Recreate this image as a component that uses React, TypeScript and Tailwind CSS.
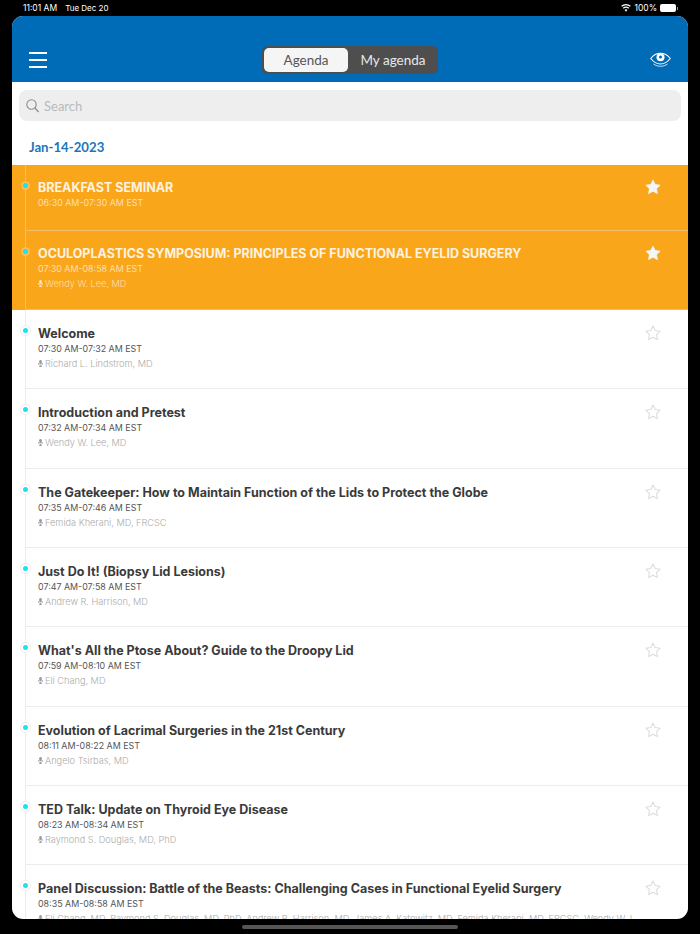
import React from "react";

const rows = [
  { t: "Welcome", h: "07:30 AM-07:32 AM EST", s: "Richard L. Lindstrom, MD" },
  { t: "Introduction and Pretest", h: "07:32 AM-07:34 AM EST", s: "Wendy W. Lee, MD" },
  { t: "The Gatekeeper: How to Maintain Function of the Lids to Protect the Globe", h: "07:35 AM-07:46 AM EST", s: "Femida Kherani, MD, FRCSC" },
  { t: "Just Do It! (Biopsy Lid Lesions)", h: "07:47 AM-07:58 AM EST", s: "Andrew R. Harrison, MD" },
  { t: "What's All the Ptose About? Guide to the Droopy Lid", h: "07:59 AM-08:10 AM EST", s: "Eli Chang, MD" },
  { t: "Evolution of Lacrimal Surgeries in the 21st Century", h: "08:11 AM-08:22 AM EST", s: "Angelo Tsirbas, MD" },
  { t: "TED Talk: Update on Thyroid Eye Disease", h: "08:23 AM-08:34 AM EST", s: "Raymond S. Douglas, MD, PhD" },
  { t: "Panel Discussion: Battle of the Beasts: Challenging Cases in Functional Eyelid Surgery", h: "08:35 AM-08:58 AM EST", s: "Eli Chang, MD, Raymond S. Douglas, MD, PhD, Andrew R. Harrison, MD, James A. Katowitz, MD, Femida Kherani, MD, FRCSC, Wendy W. L" },
];

const STAR = "M12 2.6l2.9 6.1 6.6.9-4.8 4.6 1.2 6.6L12 17.6l-5.9 3.2 1.2-6.6L2.5 9.6l6.6-.9z";

function Star({ filled }: { filled: boolean }) {
  return (
    <svg width="18" height="18" viewBox="0 0 24 24" fill={filled ? "#f0f7fd" : "none"} stroke={filled ? "#f0f7fd" : "#dcdcdc"} strokeWidth={filled ? 1 : 1.4} strokeLinejoin="round">
      <path d={STAR} />
    </svg>
  );
}

function Mic({ color }: { color: string }) {
  return (
    <svg width="5" height="7" viewBox="0 0 10 14" fill={color} className="shrink-0">
      <rect x="2.5" y="0" width="5" height="8.5" rx="2.5" />
      <path d="M0 6h1.2c0 2.4 1.6 3.8 3.8 3.8S8.800 8.400 8.800 6H10c0 3-1.700 4.700-4.200 5v1.600H8V14H2v-1.400h2.200V11C1.700 10.700 0 9 0 6z" />
    </svg>
  );
}

function Row({ t, h, s, orange, cls }: { t: string; h: string; s?: string; orange?: boolean; cls: string }) {
  return (
    <div className={`relative ${cls} pl-[13px] overflow-hidden`}>
      <div className={`h-full border-l border-b pl-[12px] ${orange ? "border-[#f2bd69]" : "border-[#ececec]"}`}>
        <div className="flex justify-between h-full">
          <div className={`min-w-0 ${orange ? "pt-[15px]" : "pt-[16px]"}`}>
            <div className={`text-[12.500px] leading-[16px] font-bold whitespace-nowrap ${orange ? "text-[#fdf3e0]" : "text-[#3a3a3a]"}`}>{t}</div>
            <div className={`mt-[1px] text-[8.900px] leading-[12px] whitespace-nowrap ${orange ? "text-[#fcdfae]" : "text-[#555555]"}`}>{h}</div>
            {s && (
              <div className={`mt-[1px] flex items-center gap-[2px] text-[9.200px] font-light leading-[15px] whitespace-nowrap ${orange ? "text-[#fcdfae]" : "text-[#ababab]"}`}>
                <Mic color={orange ? "#fcebd0" : "#9a9a9a"} />
                {s}
              </div>
            )}
          </div>
          <div className={`shrink-0 w-[70px] flex justify-center items-start ${orange ? "pt-[13px]" : "pt-[14px]"}`}>
            <Star filled={!!orange} />
          </div>
        </div>
      </div>
      <div className={`absolute left-[8.500px] top-[16px] w-[9px] h-[9px] rounded-full border-[2px] bg-[#19e3ee] ${orange ? "border-[#fbbd55]" : "border-white outline outline-[#ececec]"}`} />
    </div>
  );
}

export default function App() {
  return (
    <div className="w-[700px] h-[934px] bg-black overflow-hidden relative font-['Inter','Noto_Sans',sans-serif]">
      <div className="h-[16px] flex items-center justify-between pl-[23px] pr-[22px] text-white text-[8.500px]">
        <div className="flex gap-[8px]"><span>11:01 AM</span><span className="text-[8px]">Tue Dec 20</span></div>
        <div className="flex items-center gap-[3px]">
          <svg width="10" height="8" viewBox="0 0 22 16" fill="#fff">
            <path d="M11 16l-3.300-4a5 5 0 0 1 6.600 0zM5.800 9.700L4 7.600a11 11 0 0 1 14 0l-1.800 2.100a8 8 0 0 0-10.400 0zM2.200 5.400L.4 3.300a16.500 16.500 0 0 1 21.200 0l-1.800 2.100a13.800 13.800 0 0 0-17.600 0z" />
          </svg>
          <span>100%</span>
          <div className="flex items-center">
            <div className="w-[16px] h-[8px] rounded-[2px] bg-white" />
            <div className="w-px h-[3px] bg-white/60 ml-px" />
          </div>
        </div>
      </div>

      <div className="mx-[12px] w-[676px] h-[903px] bg-white rounded-[11px] overflow-hidden">
        <div className="h-[66px] bg-[#006bb6] relative flex items-end justify-between pb-[7px] pl-[17px] pr-[17px]">
          <div className="flex flex-col gap-[5px] mb-[7px] w-[18px]">
            <div className="h-[2px] bg-white" />
            <div className="h-[2px] bg-white" />
            <div className="h-[2px] bg-white" />
          </div>
          <div className="absolute left-[250px] top-[30px] w-[176px] h-[28px] rounded-[6px] bg-[#4e4e4e] flex font-['Lato',sans-serif] text-[13.500px]">
            <div className="w-[84px] m-[2px] mr-0 rounded-[5px] bg-[#f5f5f5] text-[#555555] flex items-center justify-center">Agenda</div>
            <div className="flex-1 text-[#e8e8e8] flex items-center justify-center">My agenda</div>
          </div>
          <svg width="21" height="15" viewBox="0 0 42 30" fill="none" stroke="#fff" strokeWidth="2.200" className="mb-[8px]">
            <path d="M1.500 13C7 6 13.500 2.500 21 2.500S35 6 40.500 13C35 20 28.500 24 21 24S7 20 1.500 13z" />
            <circle cx="21" cy="10.500" r="8" fill="#fff" stroke="none" />
            <circle cx="21" cy="10" r="3" fill="#006bb6" stroke="none" />
            <path d="M7 24c4 3 9 4.500 14 4.500S31 27 35 24" strokeWidth="1.600" />
          </svg>
        </div>

        <div className="h-[83px] pt-[8px] px-[7px]">
          <div className="h-[31px] rounded-[8px] bg-[#eeeeee] flex items-center pl-[7px] gap-[5px] font-['Lato',sans-serif] text-[13px] text-[#b9b9b9]">
            <svg width="13" height="14" viewBox="0 0 13 14" fill="none" stroke="#8e8e8e" strokeWidth="1.100">
              <circle cx="5.500" cy="5.500" r="4.700" />
              <path d="M9 9l3.500 4" strokeWidth="1.400" />
            </svg>
            <span className="pt-[2px]">Search</span>
          </div>
          <div className="mt-[17px] pl-[10px] flex items-center font-['Lato',sans-serif] font-bold text-[13.200px] leading-[18px] text-[#1b75bb]">Jan-14-2023</div>
        </div>

        <div className="bg-[#faa61a]">
          <Row orange cls="h-[66px]" t="BREAKFAST SEMINAR" h="06:30 AM-07:30 AM EST" />
          <Row orange cls="h-[79px]" t="OCULOPLASTICS SYMPOSIUM: PRINCIPLES OF FUNCTIONAL EYELID SURGERY" h="07:30 AM-08:58 AM EST" s="Wendy W. Lee, MD" />
        </div>
        {rows.map((r) => (
          <Row key={r.t} cls="h-[79.350px]" t={r.t} h={r.h} s={r.s} />
        ))}
      </div>

      <div className="absolute left-[242px] bottom-[5px] w-[216px] h-[4px] rounded-full bg-[#555555]" />
    </div>
  );
}
